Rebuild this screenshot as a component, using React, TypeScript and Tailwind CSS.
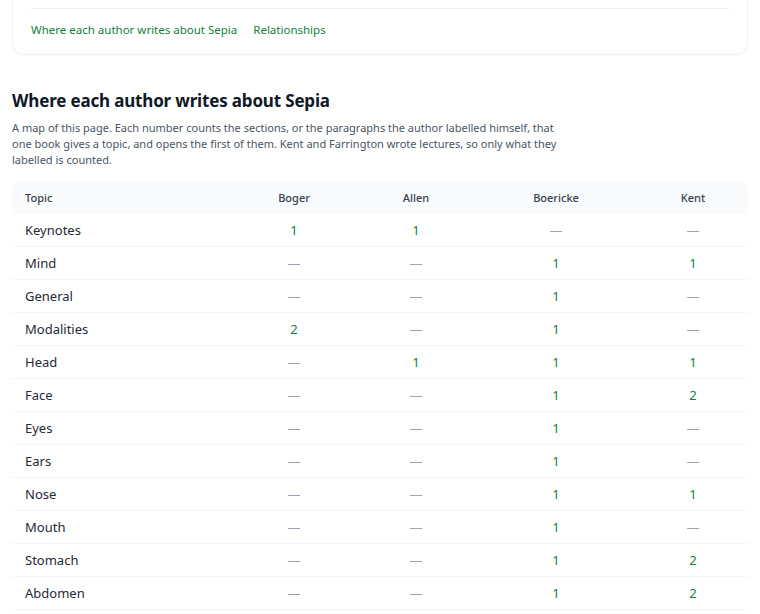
const rows: [string, (number | null)[]][] = [
  ['Keynotes', [1, 1, null, null]],
  ['Mind', [null, null, 1, 1]],
  ['General', [null, null, 1, null]],
  ['Modalities', [2, null, 1, null]],
  ['Head', [null, 1, 1, 1]],
  ['Face', [null, null, 1, 2]],
  ['Eyes', [null, null, 1, null]],
  ['Ears', [null, null, 1, null]],
  ['Nose', [null, null, 1, 1]],
  ['Mouth', [null, null, 1, null]],
  ['Stomach', [null, null, 1, 2]],
  ['Abdomen', [null, null, 1, 2]],
];

const authors = ['Boger', 'Allen', 'Boericke', 'Kent'];
const cols = 'grid grid-cols-[218px_128px_116px_164px_110px]';

export default function App() {
  return (
    <div className="h-[614px] overflow-hidden bg-white font-[Inter,'Liberation_Sans',sans-serif] text-[#111827]">
      <div className="mx-3 -mt-4 rounded-b-xl border border-t-0 border-[#f0f1f3] px-[18px] pb-4 pt-6 shadow-[0_1px_3px_rgba(0,0,0,0.03)]">
        <div className="border-t border-[#eef0f2]" />
        <div className="mt-3 flex gap-4 text-[11.5px] text-[#15803d]">
          <span>Where each author writes about Sepia</span>
          <span>Relationships</span>
        </div>
      </div>

      <div className="px-3 pt-[34px]">
        <h2 className="text-[17px] font-bold leading-6 tracking-[-0.01em]">Where each author writes about Sepia</h2>
        <p className="mt-[7px] w-[548px] text-[11px] leading-4 text-[#4b5563]">
          A map of this page. Each number counts the sections, or the paragraphs the author labelled himself, that one book gives a topic, and opens the first of them. Kent and Farrington wrote lectures, so only what they labelled is counted.
        </p>

        <div className="mt-[14px] rounded-lg">
          <div className={`${cols} h-8 items-center rounded-t-lg bg-[#f9fafb] text-[11px] font-medium text-[#374151]`}>
            <div className="pl-[13px]">Topic</div>
            {authors.map((a) => (
              <div key={a} className="text-center">{a}</div>
            ))}
          </div>
          {rows.map(([topic, vals]) => (
            <div key={topic} className={`${cols} h-[33px] items-center border-b border-[#f5f6f7] text-[13px]`}>
              <div className="pl-[13px] text-[#1f2937]">{topic}</div>
              {vals.map((v, i) => (
                <div key={i} className={`text-center ${v ? 'text-[#15803d]' : 'text-[#9ca3af]'}`}>
                  {v ?? '—'}
                </div>
              ))}
            </div>
          ))}
        </div>
      </div>
    </div>
  );
}
